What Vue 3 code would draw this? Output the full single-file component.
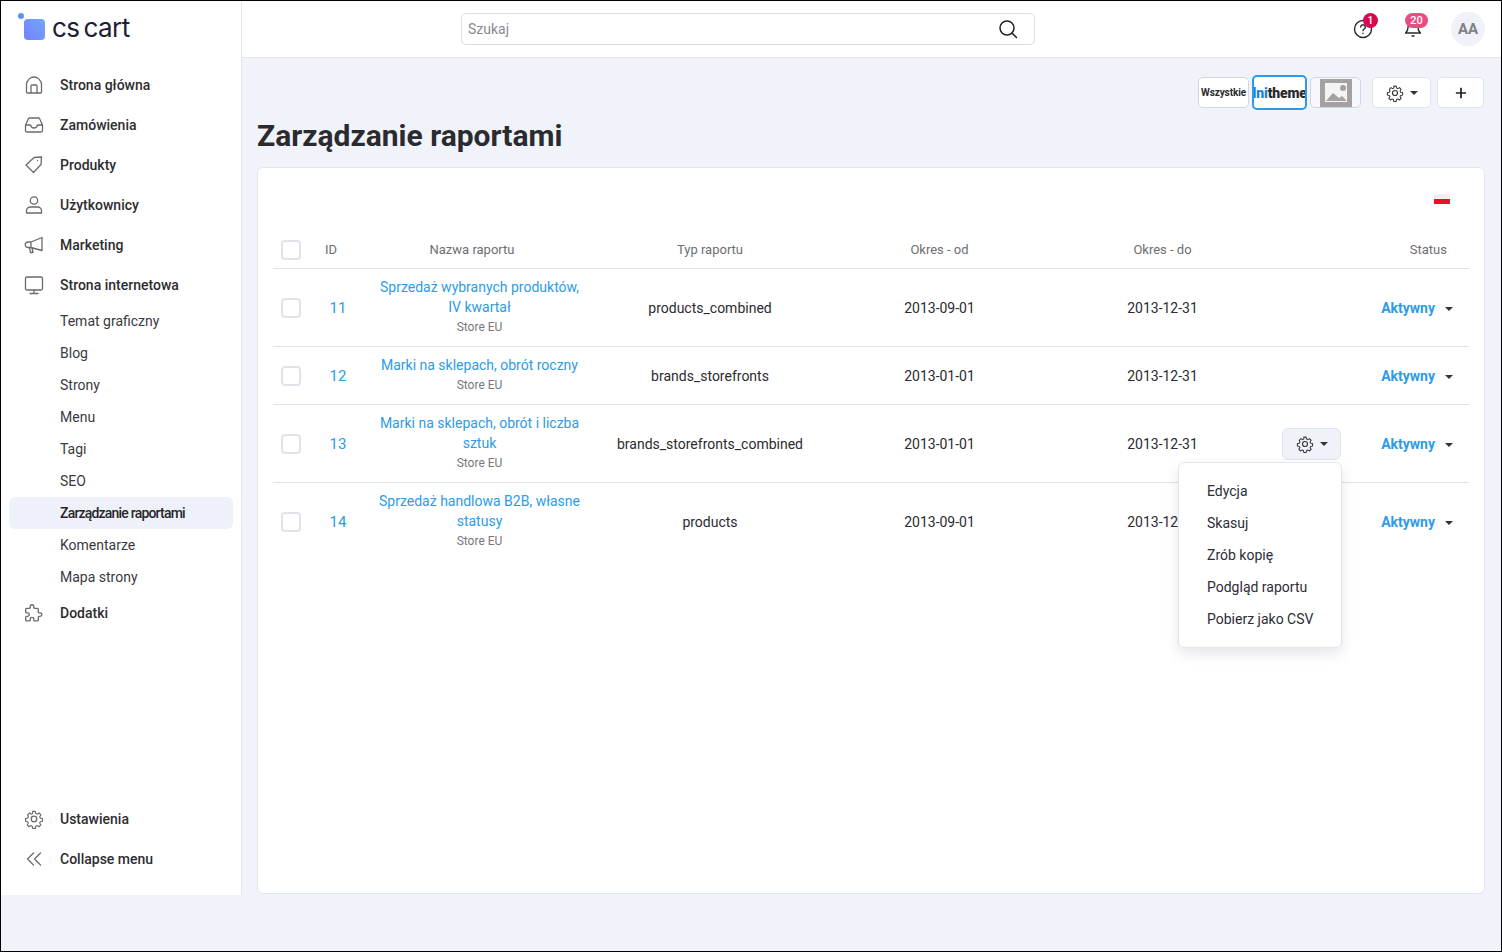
<template>
  <div class="page">
    <aside class="sidebar">
      <div class="logo">
        <span class="logo-mark"><span class="logo-dot"></span></span>
        <span class="logo-text">cs cart</span>
      </div>
      <nav class="nav">
        <template v-for="item in menu" :key="item.label">
          <a class="nav-item">
            <svg class="nav-icon" viewBox="0 0 20 20" v-html="item.icon"></svg>
            <span>{{ item.label }}</span>
          </a>
          <div v-if="item.children" class="sub-nav">
            <a
              v-for="child in item.children"
              :key="child"
              class="sub-item"
              :class="{ active: child === 'Zarządzanie raportami' }"
            >{{ child }}</a>
          </div>
        </template>
      </nav>
      <div class="nav nav-bottom">
        <a v-for="item in bottomMenu" :key="item.label" class="nav-item">
          <svg class="nav-icon" viewBox="0 0 20 20" v-html="item.icon"></svg>
          <span>{{ item.label }}</span>
        </a>
      </div>
    </aside>

    <div class="content">
      <header class="topbar">
        <div class="search">
          <span class="search-text">Szukaj</span>
          <svg class="search-icon" viewBox="0 0 20 20">
            <circle cx="9" cy="9" r="7" />
            <path d="M14 14l4.500 4.500" />
          </svg>
        </div>
        <div class="top-icons">
          <div class="top-icon help">
            <svg viewBox="0 0 20 20">
              <circle cx="10" cy="10" r="8.500" />
              <path d="M7.700 8a2.300 2.300 0 1 1 3.500 2c-.8.500-1.200 1-1.200 1.800M10 14.200v.3" />
            </svg>
            <span class="badge badge-one">1</span>
          </div>
          <div class="top-icon bell">
            <svg viewBox="0 0 20 20">
              <path d="M2.500 14c1.700-1.500 2.500-3 2.500-5.500a5 5 0 0 1 10 0c0 2.500.8 4 2.500 5.500zM9 17h2" />
            </svg>
            <span class="badge badge-two">20</span>
          </div>
          <div class="avatar">AA</div>
        </div>
      </header>

      <main class="main">
        <div class="actions">
          <div class="store-switch">
            <button class="store-btn all">Wszystkie</button>
            <button class="store-btn selected"><span class="ini">Ini</span>theme</button>
            <button class="store-btn placeholder">
              <svg viewBox="0 0 32 28">
                <rect width="32" height="28" fill="#a3a1a1" />
                <rect x="5" y="4" width="22" height="19" fill="#f4f4f4" />
                <path d="M6 22l7-8 6 5 3-2 4 4v1z" fill="#a3a1a1" />
                <circle cx="23" cy="9" r="3" fill="#a3a1a1" />
              </svg>
            </button>
          </div>
          <button class="tool-btn gear-btn">
            <svg class="gear" viewBox="0 0 20 20" v-html="gearIcon"></svg>
            <span class="caret"></span>
          </button>
          <button class="tool-btn plus-btn">
            <svg viewBox="0 0 14 14"><path d="M7 1v12M1 7h12" /></svg>
          </button>
        </div>
        <h1 class="title">Zarządzanie raportami</h1>

        <section class="card">
          <div class="flag"></div>
          <table class="reports">
            <colgroup>
              <col class="c-check" />
              <col class="c-id" />
              <col class="c-name" />
              <col class="c-type" />
              <col class="c-from" />
              <col class="c-to" />
              <col class="c-tools" />
              <col class="c-status" />
            </colgroup>
            <thead>
              <tr>
                <th><span class="check"></span></th>
                <th class="th-id">ID</th>
                <th class="th-name">Nazwa raportu</th>
                <th>Typ raportu</th>
                <th>Okres - od</th>
                <th>Okres - do</th>
                <th></th>
                <th class="th-status">Status</th>
              </tr>
            </thead>
            <tbody>
              <tr v-for="row in reports" :key="row.id" :class="{ last: row.id === 14 }">
                <td><span class="check"></span></td>
                <td class="link id">{{ row.id }}</td>
                <td class="name">
                  <a class="link">{{ row.name }}</a>
                  <div class="store">Store EU</div>
                </td>
                <td class="center">{{ row.type }}</td>
                <td class="center">{{ row.from }}</td>
                <td class="center">{{ row.to }}</td>
                <td class="tools">
                  <template v-if="row.id === 13">
                    <button class="row-gear">
                      <svg class="gear" viewBox="0 0 20 20" v-html="gearIcon"></svg>
                      <span class="caret"></span>
                    </button>
                    <ul class="dropdown">
                      <li v-for="action in actions" :key="action">{{ action }}</li>
                    </ul>
                  </template>
                </td>
                <td class="status">
                  <span class="status-text">Aktywny</span><span class="caret"></span>
                </td>
              </tr>
            </tbody>
          </table>
        </section>
      </main>
    </div>
  </div>
</template>

<script setup>
const gearIcon = '<path d="M8.500 1.500h3l.5 2.400 1.500.7 2.100-1.300 2 2.100-1.300 2.100.7 1.500 2.400.5v3l-2.400.5-.7 1.500 1.300 2.100-2 2-2.100-1.300-1.500.7-.5 2.400h-3l-.5-2.400-1.500-.7-2.100 1.300-2-2 1.300-2.100-.7-1.500-2.400-.5v-3l2.400-.5.7-1.500L3 5.400l2-2.100 2.100 1.300 1.500-.7z" transform="translate(1 1) scale(.9)"/><circle cx="10" cy="10" r="2.800"/>'

const menu = [
  { label: 'Strona główna', icon: '<path d="M2.500 8.500C3.500 5 6.500 2 10 2s6.500 3 7.500 6.500V17a1 1 0 0 1-1 1h-13a1 1 0 0 1-1-1zM7 18v-7a1 1 0 0 1 1-1h4a1 1 0 0 1 1 1v7"/>' },
  { label: 'Zamówienia', icon: '<path d="M1.500 10l3-6.500a1 1 0 0 1 1-.5h9a1 1 0 0 1 1 .5l3 6.500v5.500a1.500 1.500 0 0 1-1.500 1.500H3a1.500 1.500 0 0 1-1.500-1.500zM1.500 10l5 0c.5 2 2 3 3.500 3s3-1 3.500-3l5 0"/>' },
  { label: 'Produkty', icon: '<path d="M2 10l8-7.500 7.500-.5-.5 7.500-7.500 8zM13.500 5.500v.1"/>' },
  { label: 'Użytkownicy', icon: '<circle cx="10" cy="5.500" r="3.700"/><path d="M2.500 18v-2.500c0-2 2-3.500 4-3.500h7c2 0 4 1.500 4 3.500V18z"/>' },
  { label: 'Marketing', icon: '<path d="M18 2.500v13L7 12.500H4a2.500 2.500 0 0 1 0-5.500h3zM7 7v5.500M5.500 12.500l1 5h2.500l-1-4.500"/>' },
  {
    label: 'Strona internetowa',
    icon: '<rect x="1.500" y="2" width="17" height="13" rx="1.500"/><path d="M10 15v3.500M6 18.500h8"/>',
    children: ['Temat graficzny', 'Blog', 'Strony', 'Menu', 'Tagi', 'SEO', 'Zarządzanie raportami', 'Komentarze', 'Mapa strony']
  },
  { label: 'Dodatki', icon: '<path transform="translate(-1 -1) scale(.9)" stroke-width="1.500" d="M4 7h3a1 1 0 0 0 1-1v-1a2 2 0 0 1 4 0v1a1 1 0 0 0 1 1h3a1 1 0 0 1 1 1v3a1 1 0 0 0 1 1h1a2 2 0 0 1 0 4h-1a1 1 0 0 0-1 1v3a1 1 0 0 1-1 1h-3a1 1 0 0 1-1-1v-1a2 2 0 0 0-4 0v1a1 1 0 0 1-1 1h-3a1 1 0 0 1-1-1v-3a1 1 0 0 1 1-1h1a2 2 0 0 0 0-4h-1a1 1 0 0 1-1-1v-3a1 1 0 0 1 1-1"/>' }
]

const bottomMenu = [
  { label: 'Ustawienia', icon: gearIcon },
  { label: 'Collapse menu', icon: '<path d="M9.500 4L3.500 10l6 6M16.500 4l-6 6 6 6"/>' }
]

const reports = [
  { id: 11, name: 'Sprzedaż wybranych produktów, IV kwartał', type: 'products_combined', from: '2013-09-01', to: '2013-12-31' },
  { id: 12, name: 'Marki na sklepach, obrót roczny', type: 'brands_storefronts', from: '2013-01-01', to: '2013-12-31' },
  { id: 13, name: 'Marki na sklepach, obrót i liczba sztuk', type: 'brands_storefronts_combined', from: '2013-01-01', to: '2013-12-31' },
  { id: 14, name: 'Sprzedaż handlowa B2B, własne statusy', type: 'products', from: '2013-09-01', to: '2013-12-31' }
]

const actions = ['Edycja', 'Skasuj', 'Zrób kopię', 'Podgląd raportu', 'Pobierz jako CSV']
</script>

<style>
html, body {
  margin: 0;
  padding: 0;
}
</style>

<style scoped>
.page {
  box-sizing: border-box;
  width: 1502px;
  height: 952px;
  border: 1px solid #000;
  display: flex;
  align-items: flex-start;
  background: #f0f3fa;
  font-family: Roboto, "Noto Sans", sans-serif;
  font-size: 14px;
  color: #2b2b2f;
  overflow: hidden;
}
.sidebar {
  box-sizing: border-box;
  width: 241px;
  height: 894px;
  background: #fff;
  border-right: 1px solid #e3e6ef;
  display: flex;
  flex-direction: column;
  flex-shrink: 0;
}
.logo {
  height: 64px;
  display: flex;
  align-items: flex-start;
  padding: 18px 0 0 23px;
  box-sizing: border-box;
}
.logo-mark {
  position: relative;
  width: 21px;
  height: 21px;
  border-radius: 4px;
  background: linear-gradient(45deg, #7480fc, #70a8fb);
}
.logo-dot {
  position: absolute;
  left: -6px;
  top: -6px;
  width: 6px;
  height: 6px;
  border-radius: 50%;
  background: #5b93f0;
}
.logo-text {
  margin-left: 7px;
  margin-top: -1px;
  font-family: Inter, sans-serif;
  font-size: 26px;
  line-height: 20px;
  letter-spacing: -0.5px;
  word-spacing: -3px;
  color: #1c2033;
}
.nav {
  display: flex;
  flex-direction: column;
}
.nav-item {
  height: 40px;
  display: flex;
  align-items: center;
  padding-left: 23px;
  font-weight: 500;
  color: #2d2d30;
}
.nav-icon {
  width: 20px;
  height: 20px;
  margin-right: 16px;
  fill: none;
  stroke: #6a6a6d;
  stroke-width: 1.3;
  stroke-linejoin: round;
  stroke-linecap: round;
}
.sub-nav {
  display: flex;
  flex-direction: column;
  padding: 0 8px 0 8px;
}
.sub-item {
  height: 32px;
  display: flex;
  align-items: center;
  padding-left: 51px;
  border-radius: 6px;
  color: #3a3a3e;
}
.sub-item.active {
  background: #eef1f9;
  font-weight: 500;
  letter-spacing: -0.8px;
  color: #26262a;
}
.nav-bottom {
  margin-top: auto;
  padding-bottom: 16px;
}
.content {
  flex: 1;
  min-width: 0;
  display: flex;
  flex-direction: column;
}
.topbar {
  box-sizing: border-box;
  height: 57px;
  background: #fff;
  border-bottom: 1px solid #e3e6ef;
  display: flex;
  align-items: center;
  padding-left: 219px;
  position: relative;
}
.search {
  box-sizing: border-box;
  width: 574px;
  height: 32px;
  align-self: flex-start;
  margin-top: 12px;
  border: 1px solid #dcdfe6;
  border-radius: 5px;
  display: flex;
  align-items: center;
  justify-content: space-between;
  padding: 0 16px 0 6px;
}
.search-text {
  color: #8a8a8f;
}
.search-icon {
  width: 20px;
  height: 20px;
  fill: none;
  stroke: #1f1f22;
  stroke-width: 1.5;
  stroke-linecap: round;
}
.top-icons {
  margin-left: auto;
  display: flex;
  align-items: center;
  padding-right: 16px;
}
.top-icon {
  position: relative;
  width: 20px;
  height: 20px;
}
.top-icon svg {
  width: 20px;
  height: 20px;
  fill: none;
  stroke: #2a2a2d;
  stroke-width: 1.4;
  stroke-linecap: round;
  stroke-linejoin: round;
}
.help {
  margin-right: 30px;
}
.bell {
  margin-right: 28px;
}
.badge {
  position: absolute;
  color: #fff;
  font-size: 11px;
  font-weight: 500;
  line-height: 14px;
  text-align: center;
}
.badge-one {
  left: 10px;
  top: -6px;
  width: 15px;
  height: 15px;
  line-height: 15px;
  border-radius: 50%;
  background: #d6094f;
}
.badge-two {
  left: 2px;
  top: -6px;
  width: 23px;
  height: 15px;
  line-height: 15px;
  border-radius: 8px;
  background: #ec4a83;
}
.avatar {
  width: 34px;
  height: 34px;
  border-radius: 50%;
  background: #eff2f8;
  color: #7f8084;
  font-weight: 700;
  font-size: 15px;
  line-height: 34px;
  text-align: center;
}
.main {
  padding: 0 16px 0 15px;
  display: flex;
  flex-direction: column;
}
.actions {
  height: 54px;
  display: flex;
  align-items: center;
  justify-content: flex-end;
  padding-top: 15px;
  padding-right: 1px;
  box-sizing: border-box;
}
.store-switch {
  display: flex;
  align-items: center;
  gap: 3px;
  margin-right: 11px;
}
.store-btn {
  box-sizing: border-box;
  width: 51px;
  height: 31px;
  padding: 0;
  background: #fff;
  border: 1px solid #d3d6de;
  border-radius: 5px;
  font-family: Roboto, sans-serif;
  color: #2b2b2f;
  font-weight: 700;
  display: flex;
  align-items: center;
  justify-content: center;
  overflow: hidden;
  white-space: nowrap;
}
.store-btn.all {
  font-size: 10px;
  letter-spacing: -0.1px;
}
.store-btn.selected {
  width: 55px;
  height: 35px;
  border: 2px solid #2d9be8;
  font-size: 14px;
  font-weight: 900;
  letter-spacing: -0.2px;
}
.ini {
  color: #1d7fdb;
}
.store-btn.placeholder {
  background: #f7f8fb;
}
.store-btn.placeholder svg {
  width: 32px;
  height: 28px;
}
.tool-btn {
  box-sizing: border-box;
  height: 31px;
  padding: 0;
  background: #fff;
  border: 1px solid #e1e4ec;
  border-radius: 5px;
  display: flex;
  align-items: center;
  justify-content: center;
}
.gear-btn {
  width: 59px;
  margin-right: 6px;
}
.plus-btn {
  width: 47px;
}
.plus-btn svg {
  width: 12px;
  height: 12px;
  fill: none;
  stroke: #222;
  stroke-width: 2;
}
.gear {
  width: 18px;
  height: 18px;
  fill: none;
  stroke: #3a3a3e;
  stroke-width: 1.3;
  stroke-linejoin: round;
}
.caret {
  display: inline-block;
  width: 0;
  height: 0;
  margin-left: 6px;
  border-left: 4px solid transparent;
  border-right: 4px solid transparent;
  border-top: 4px solid #333;
}
.title {
  margin: 6px 0 14px;
  font-size: 30px;
  line-height: 35px;
  font-weight: 700;
  color: #2b2b2f;
}
.card {
  box-sizing: border-box;
  height: 727px;
  background: #fff;
  border: 1px solid #e3e6ef;
  border-radius: 6px;
  padding: 0 15px;
  position: relative;
}
.flag {
  position: absolute;
  left: 1176px;
  top: 26px;
  width: 16px;
  height: 10px;
  background: linear-gradient(#f0f0f0 50%, #e4122d 50%);
}
.reports {
  width: 1196px;
  margin-top: 49px;
  border-collapse: collapse;
  table-layout: fixed;
}
.c-check { width: 42px; }
.c-id { width: 50px; }
.c-name { width: 229px; }
.c-type { width: 232px; }
.c-from { width: 227px; }
.c-to { width: 219px; }
.c-tools { width: 78px; }
.c-status { width: 119px; }
th {
  height: 37px;
  padding: 14px 0 0;
  border-bottom: 1px solid #dfe2e9;
  font-size: 13px;
  font-weight: 400;
  color: #6e6e72;
  text-align: center;
}
th.th-id {
  text-align: left;
  padding-left: 10px;
}
th.th-name {
  padding-right: 15px;
}
th.th-status {
  text-align: right;
  padding-right: 22px;
}
td {
  padding: 0;
  border-bottom: 1px solid #dfe2e9;
  text-align: center;
  vertical-align: middle;
}
tbody tr {
  height: 58px;
}
tr.last td {
  border-bottom: none;
}
.check {
  display: block;
  box-sizing: border-box;
  width: 20px;
  height: 20px;
  margin-left: 8px;
  border: 2px solid #e0e3ea;
  border-radius: 4px;
}
.link {
  color: #2d9be8;
}
.id {
  font-size: 15px;
  padding-right: 4px;
  text-align: center;
}
.name {
  padding: 8px 13px 9px;
  line-height: 20px;
}
.store {
  font-size: 12px;
  color: #77777b;
  line-height: 20px;
}
.center {
  color: #2b2b2f;
}
.tools {
  position: relative;
}
.row-gear {
  box-sizing: border-box;
  width: 59px;
  height: 32px;
  margin-left: 10px;
  padding: 0;
  background: #eff2f8;
  border: 1px solid #e0e3ec;
  border-radius: 6px;
  display: flex;
  align-items: center;
  justify-content: center;
}
.dropdown {
  box-sizing: border-box;
  position: absolute;
  z-index: 5;
  top: 57px;
  left: -94px;
  width: 164px;
  height: 186px;
  margin: 0;
  padding: 12px 0;
  list-style: none;
  background: #fff;
  border: 1px solid #e3e6ef;
  border-radius: 6px;
  box-shadow: 0 6px 14px rgba(40, 50, 80, 0.12);
  text-align: left;
}
.dropdown li {
  height: 32px;
  line-height: 32px;
  padding-left: 28px;
  color: #2d2d35;
}
.status {
  text-align: right;
  padding-right: 16px;
  white-space: nowrap;
}
.status-text {
  color: #2d9be8;
  font-weight: 700;
}
.status .caret {
  margin-left: 10px;
  vertical-align: 2px;
}
</style>
